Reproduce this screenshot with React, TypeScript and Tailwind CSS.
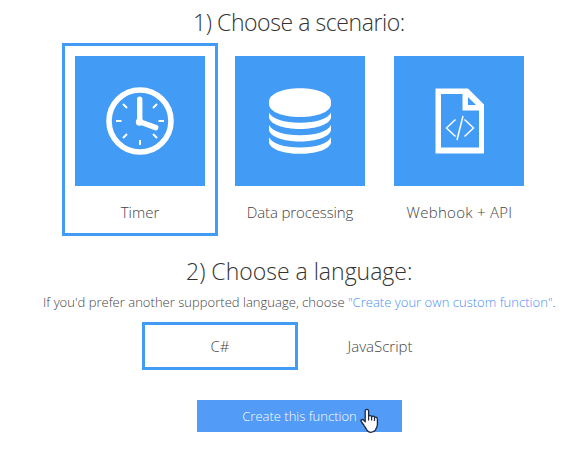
import type { ReactNode } from "react";

function ClockIcon() {
  return (
    <svg width="130" height="130" viewBox="0 0 130 130" fill="none" stroke="#fff">
      <circle cx="65" cy="65" r="31" strokeWidth="5.6" />
      <path d="M64.700 43.300v22.500l16 5.800" strokeWidth="5.400" strokeLinecap="round" strokeLinejoin="round" />
      <circle cx="64.500" cy="66" r="3.700" fill="#fff" stroke="none" />
      <path
        d="M41 65h5.500M83.500 65h5.500M65 84v5M48 48l4 4M82 48l-4 4M48 82l4-4M82 82l-4-4"
        strokeWidth="2"
      />
    </svg>
  );
}

function DatabaseIcon() {
  return (
    <svg width="130" height="130" viewBox="0 0 130 130" fill="#fff">
      <path d="M34 45.500C34 38 47.500 32.200 65 32.200s31 5.800 31 13.300v2.700C96 55.300 83 61 65 61S34 55.300 34 48.200Z" />
      <path d="M34 56.500C37 63 49 66.800 65 66.800S93 63 96 56.500v5.300C94.500 68.200 82 73 65 73S35.500 68.200 34 61.800Z" />
      <path d="M34 69C37 75.500 49 79.200 65 79.200S93 75.500 96 69v5.200C94.500 80.600 82 85.400 65 85.400S35.500 80.600 34 74.200Z" />
      <path d="M34 81.200C37 87.700 49 91.500 65 91.500S93 87.700 96 81.200v5.500C94.500 93 82 97.800 65 97.800S35.500 93 34 86.700Z" />
    </svg>
  );
}

function CodeFileIcon() {
  return (
    <svg width="130" height="130" viewBox="0 0 130 130" fill="none" stroke="#fff">
      <path fill="#fff" stroke="none" fillRule="evenodd" d="M41.500 32.500H74L90 48.500v49H41.500ZM47 38v53.500h38V54.500H68.500V38ZM74 41v8h8Z" />
      <path d="M61.500 63.500L52.500 72l9 8.500M70.500 63.500l9 8.500-9 8.500M69 60l-6 24" strokeWidth="1.500" />
    </svg>
  );
}

function PointerCursor() {
  return (
    <svg className="absolute left-[163px] top-[8px]" width="19" height="26" viewBox="0 0 19 26">
      <path
        d="M5.200 3C5.200.8 8.600.8 8.600 3v5.200c.8-1 2.700-.8 3 .5.900-.9 2.600-.6 2.900.7 1.200-.7 2.900 0 2.900 1.800v5.200c0 2.500-1.400 3.500-1.800 5.500C14.500 23.500 12.500 24.300 10.800 24.300S7.500 23.500 6.500 21.500c-.8-1.700-1.500-2.400-2.300-3.800-.8-1.500-2.700-3.300-3.200-4.600-.4-1.800 1.700-2 2.800-.9l1.400 1.700Z"
        fill="#fff"
        stroke="#1d2740"
        strokeWidth="1.300"
        strokeLinejoin="round"
      />
      <path d="M8.600 8v4.500M11.600 9v3.500M14.500 10v3" stroke="#1d2740" strokeWidth="1.200" />
    </svg>
  );
}

function Scenario({ icon, children, selected = false }: { icon: ReactNode; children: ReactNode; selected?: boolean }) {
  return (
    <div className={`h-[193px] w-[156px] shrink-0 border-[3px] p-[10px] ${selected ? "border-[#429bf4]" : "border-transparent"}`}>
      <div className="size-[130px] bg-[#429bf4]">{icon}</div>
      <div className="mt-[14px] whitespace-nowrap text-center text-[15px] leading-6">{children}</div>
    </div>
  );
}

export default function App() {
  return (
    <main className="h-[466px] w-[587px] overflow-hidden bg-white font-['Open_Sans',sans-serif] font-light text-[#444]">
      <h1 className="pl-[193px] pt-[6px] text-[23px] leading-8 tracking-[-0.43px] text-[#333]">
        <span>1) Choose a scenario:</span>
      </h1>
      <section className="mt-[5px] flex pl-[62px]">
        <Scenario selected icon={<ClockIcon />}><span>Timer</span></Scenario>
        <div className="ml-1"><Scenario icon={<DatabaseIcon />}><span className="tracking-[-0.12px]">Data processing</span></Scenario></div>
        <div className="ml-[3px]"><Scenario icon={<CodeFileIcon />}><span className="ml-px tracking-[0.28px]">Webhook + API</span></Scenario></div>
      </section>
      <h2 className="mt-[19px] pl-[186px] text-[23px] leading-8 text-[#333]">
        <span>2) Choose a language:</span>
      </h2>
      <p className="mt-[5px] whitespace-nowrap pl-[43px] text-[13px] leading-5 tracking-[0.025px]">
        <span>If you'd prefer another supported language, choose <a className="text-[#4c8ff5]">"Create your own custom function"</a>.</span>
      </p>
      <div className="mt-[10px] flex pl-[142px] text-[15px]">
        <div className="flex h-12 w-[156px] items-center justify-center border-[3px] border-[#429bf4]">C#</div>
        <div className="ml-1 flex h-12 w-[156px] items-center justify-center">JavaScript</div>
      </div>
      <button className="relative ml-[197px] mt-[30px] block h-8 w-[205px] bg-[#529bf6] text-center text-[13px] leading-8 text-white">
        <span>Create this function</span>
        <PointerCursor />
      </button>
    </main>
  );
}
